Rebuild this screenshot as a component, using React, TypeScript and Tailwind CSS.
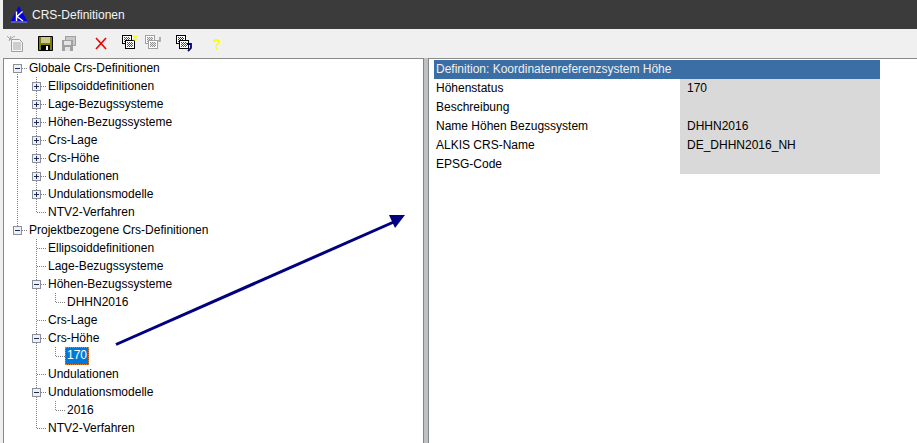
import React from "react";

type Cell = "" | "v" | "t" | "l" | "tb" | "lb" | "tp" | "m";

function Guide({ c }: { c: Cell }) {
  const dot = { stroke: "#808080", strokeWidth: 1, strokeDasharray: "1 1", fill: "none" } as const;
  const vert = c === "v" || c === "t" || c === "tb" || c === "tp";
  const half = c === "l" || c === "lb";
  const hasBox = c === "tb" || c === "lb" || c === "tp" || c === "m";
  const plus = c === "tp";
  return (
    <svg width="19" height="18" className="shrink-0 block">
      {vert && <line x1="9.5" y1="0" x2="9.5" y2="18" {...dot} />}
      {half && <line x1="9.5" y1="0" x2="9.5" y2="9" {...dot} />}
      {c === "m" && <line x1="9.5" y1="9" x2="9.5" y2="18" {...dot} />}
      {c !== "" && c !== "v" && <line x1="10" y1="9.5" x2="19" y2="9.5" {...dot} />}
      {hasBox && (
        <g>
          <rect x="5.5" y="5.5" width="8" height="8" fill="#eef0f4" stroke="#8a8f98" />
          <line x1="7" y1="9.5" x2="12" y2="9.5" stroke="#1c2a5c" />
          {plus && <line x1="9.5" y1="7" x2="9.5" y2="12" stroke="#1c2a5c" />}
        </g>
      )}
    </svg>
  );
}

const tree: { cells: Cell[]; text: string; sel?: boolean }[] = [
  { cells: ["m"], text: "Globale Crs-Definitionen" },
  { cells: ["v", "tp"], text: "Ellipsoiddefinitionen" },
  { cells: ["v", "tp"], text: "Lage-Bezugssysteme" },
  { cells: ["v", "tp"], text: "Höhen-Bezugssysteme" },
  { cells: ["v", "tp"], text: "Crs-Lage" },
  { cells: ["v", "tp"], text: "Crs-Höhe" },
  { cells: ["v", "tp"], text: "Undulationen" },
  { cells: ["v", "tp"], text: "Undulationsmodelle" },
  { cells: ["v", "l"], text: "NTV2-Verfahren" },
  { cells: ["lb"], text: "Projektbezogene Crs-Definitionen" },
  { cells: ["", "t"], text: "Ellipsoiddefinitionen" },
  { cells: ["", "t"], text: "Lage-Bezugssysteme" },
  { cells: ["", "tb"], text: "Höhen-Bezugssysteme" },
  { cells: ["", "v", "l"], text: "DHHN2016" },
  { cells: ["", "t"], text: "Crs-Lage" },
  { cells: ["", "tb"], text: "Crs-Höhe" },
  { cells: ["", "v", "l"], text: "170", sel: true },
  { cells: ["", "t"], text: "Undulationen" },
  { cells: ["", "tb"], text: "Undulationsmodelle" },
  { cells: ["", "v", "l"], text: "2016" },
  { cells: ["", "l"], text: "NTV2-Verfahren" },
];

const props: [string, string][] = [
  ["Höhenstatus", "170"],
  ["Beschreibung", ""],
  ["Name Höhen Bezugssystem", "DHHN2016"],
  ["ALKIS CRS-Name", "DE_DHHN2016_NH"],
  ["EPSG-Code", ""],
];

function Sheet({ x, y, id, dark = "#000" }: { x: number; y: number; id: string; dark?: string }) {
  return (
    <g>
      <rect x={x + 0.5} y={y + 0.5} width="9" height="8" fill="#fff" stroke={dark} />
      <rect x={x + 2} y={y + 2} width="6" height="5" fill={`url(#${id})`} />
    </g>
  );
}

function Sheets({ top, bottom, dark = "#000" }: { top: string; bottom: string; dark?: string }) {
  return (
    <>
      <Sheet x={0} y={0} id={top} dark={dark} />
      <Sheet x={3} y={5} id={bottom} dark={dark} />
    </>
  );
}

function Tool({ w = 19, mr = 0, children }: { w?: number; mr?: number; children: React.ReactNode }) {
  return (
    <svg width={w} height="17" viewBox={`0 0 ${w} 17`} className="block shrink-0" style={{ marginRight: mr }}>
      {children}
    </svg>
  );
}

export default function App() {
  return (
    <div className="relative w-[917px] h-[443px] overflow-hidden bg-[#f0f0f0] text-[12px] text-black" style={{ fontFamily: '"Liberation Sans", Tahoma, sans-serif' }}>
      <svg width="0" height="0" className="absolute">
        <defs>
          <pattern id="dg" width="2" height="2" patternUnits="userSpaceOnUse">
            <rect width="2" height="2" fill="#fff" />
            <rect width="1" height="1" fill="#008000" />
            <rect x="1" y="1" width="1" height="1" fill="#008000" />
          </pattern>
          <pattern id="dr" width="2" height="2" patternUnits="userSpaceOnUse">
            <rect width="2" height="2" fill="#fff" />
            <rect width="1" height="1" fill="#900000" />
            <rect x="1" y="1" width="1" height="1" fill="#900000" />
          </pattern>
          <pattern id="dk" width="2" height="2" patternUnits="userSpaceOnUse">
            <rect width="2" height="2" fill="#e8e8e8" />
            <rect width="1" height="1" fill="#909090" />
            <rect x="1" y="1" width="1" height="1" fill="#909090" />
          </pattern>
        </defs>
      </svg>
      <div className="h-[29px] ml-[3px] bg-[#3b3b3b] flex items-center text-[#f4f4f4]">
        <svg width="18" height="17" viewBox="0 0 18 17" className="ml-[7px] shrink-0">
          <path d="M9 0 L17.5 15.5 L0.5 15.5 Z" fill="#0000e0" />
          <path d="M6.5 5.5 V15 M12.5 5.5 L7 10.5 L13 15" stroke="#fff" strokeWidth="1.4" fill="none" />
          <rect x="1" y="15.5" width="16" height="1" fill="#8080ff" />
        </svg>
        <span className="ml-[4px] text-[12px] leading-none">CRS-Definitionen</span>
      </div>
      <div className="h-[29px] pl-[6px] flex items-center">
        <Tool mr={13}>
          <path d="M5.5 4.5 H13.5 L16.5 7.5 V16.5 H5.5 Z" fill="#f4f4f4" stroke="#a0a0a0" />
          <path d="M7 8H15M7 10H15M7 12H15M7 14H15" stroke="#a8a8a8" />
          <path d="M1 1 L5 5 M5 1 L3 6 M9 1 L4 4" stroke="#a8a8a8" />
        </Tool>
        <Tool w={16} mr={7}>
          <path d="M0.5 1.5 H14.5 V15.5 H0.5 Z" fill="#808000" stroke="#000" />
          <rect x="3" y="2" width="9" height="6" fill="#c8c890" />
          <rect x="3" y="10" width="9" height="6" fill="#000" />
          <rect x="8" y="11" width="2" height="4" fill="#fff" />
        </Tool>
        <Tool w={16} mr={17}>
          <rect x="4.5" y="1.5" width="10" height="9" fill="#c8c8c8" stroke="#a0a0a0" />
          <rect x="1" y="5" width="11" height="11" fill="#a0a0a0" />
          <rect x="3" y="6" width="7" height="4" fill="#e4e4e4" />
          <rect x="4" y="12" width="5" height="4" fill="#e4e4e4" />
        </Tool>
        <Tool w={14} mr={14}>
          <path d="M2 3 L12 14 M12 3 L2 14" stroke="#f00000" strokeWidth="1.6" />
        </Tool>
        <Tool w={16} mr={7}>
          <Sheets top="dg" bottom="dg" />
          <path d="M11 1 L15 5 M15 1 L11 5 M13 0 V6" stroke="#ffff00" strokeWidth="1.2" />
        </Tool>
        <Tool w={16} mr={15}>
          <Sheets top="dk" bottom="dk" dark="#a0a0a0" />
          <path d="M12 6 H15 V2" stroke="#a0a0a0" strokeWidth="1.6" fill="none" />
        </Tool>
        <Tool w={16} mr={21}>
          <Sheets top="dr" bottom="dg" />
          <path d="M11 9 H15 V13 L12 16" stroke="#000080" strokeWidth="1.8" fill="none" />
        </Tool>
        <span className="text-[#ffff00] font-bold text-[14px] leading-none">?</span>
      </div>
      <div className="flex h-[385px] ml-[3px]">
        <div className="w-[420px] bg-white border-l border-t border-[#8a8a8a] pl-[4px]">
          {tree.map((r, i) => (
            <div key={i} className="flex h-[18px] items-center">
              {r.cells.map((c, j) => (
                <Guide key={j} c={c} />
              ))}
              <span className={r.sel ? "px-[2px] h-[18px] leading-[17px] bg-[#0078d7] text-white outline-1 outline-dotted outline-offset-[-1px] outline-[#e08030]" : "ml-[2px] leading-[16px] pb-px"}>
                {r.text}
              </span>
            </div>
          ))}
        </div>
        <div className="w-[6px] bg-[#c0c0c0] border-x border-[#7c8792]" />
        <div className="flex-1 bg-white border-t border-[#8a8a8a] pl-[5px] pt-px">
          <div className="w-[446px]">
            <div className="h-[19px] bg-[#3a6ea5] text-[#f0f0f0] pl-[2px] leading-[18px]">Definition: Koordinatenreferenzsystem Höhe</div>
            {props.map(([k, v]) => (
              <div key={k} className="flex h-[19px] leading-[18px]">
                <div className="w-[246px] pl-[2px]">{k}</div>
                <div className="flex-1 bg-[#d9d9d9] pl-[7px]">{v}</div>
              </div>
            ))}
          </div>
        </div>
      </div>
      <svg width="917" height="443" className="absolute left-0 top-0 pointer-events-none">
        <line x1="116" y1="344.5" x2="396" y2="221" stroke="#000080" strokeWidth="3" />
        <path d="M389 215 H405 L395 228 Z" fill="#000080" />
      </svg>
    </div>
  );
}
